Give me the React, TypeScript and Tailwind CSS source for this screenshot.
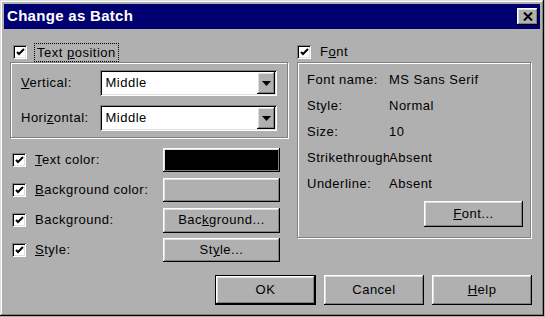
import React from "react";

const raised =
  "shadow-[inset_-1px_-1px_0_#000,inset_1px_1px_0_#fff,inset_-2px_-2px_0_#808080,inset_2px_2px_0_#dfdfdf]";
const sunken =
  "shadow-[inset_1px_1px_0_#808080,inset_-1px_-1px_0_#fff,inset_2px_2px_0_#000,inset_-2px_-2px_0_#dfdfdf]";
const etched = "border border-[#808080] shadow-[1px_1px_0_#fff,inset_1px_1px_0_#fff]";

function U({ children }: { children: React.ReactNode }) {
  return <span className="underline underline-offset-[1px]">{children}</span>;
}

function CheckBox() {
  return (
    <div className={`flex h-[14px] w-[14px] shrink-0 items-center justify-center bg-white ${sunken}`}>
      <svg width="9" height="9" viewBox="0 0 9 9">
        <path d="M1 4 L3 6 L8 1" stroke="#000" strokeWidth="2" fill="none" />
      </svg>
    </div>
  );
}

function Combo({ value }: { value: string }) {
  return (
    <div className={`flex h-[26px] w-[182px] items-stretch bg-white p-[2px] ${sunken}`}>
      <span className="flex-1 pl-[3px] leading-[22px]">{value}</span>
      <div className={`flex w-[18px] items-center justify-center bg-[#b0b0b0] ${raised}`}>
        <svg width="9" height="5" viewBox="0 0 9 5">
          <path d="M0 0 H9 L4.5 5 Z" fill="#000" />
        </svg>
      </div>
    </div>
  );
}

function Button({
  children,
  className = "",
  face = "bg-[#b0b0b0]",
}: {
  children?: React.ReactNode;
  className?: string;
  face?: string;
}) {
  return (
    <div className={`flex items-center justify-center ${face} ${raised} ${className}`}>{children}</div>
  );
}

function CheckRow({ label, children }: { label: React.ReactNode; children: React.ReactNode }) {
  return (
    <div className="flex h-[24px] items-center">
      <div className="ml-[2px]">
        <CheckBox />
      </div>
      <span className="ml-[9px] flex-1">{label}</span>
      <div className="mr-[8px]">{children}</div>
    </div>
  );
}

function InfoRow({ label, value }: { label: string; value: string }) {
  return (
    <div className="flex h-[26px] items-center">
      <span className="w-[82px] shrink-0 overflow-hidden whitespace-nowrap">{label}</span>
      <span className="whitespace-nowrap">{value}</span>
    </div>
  );
}

export default function App() {
  return (
    <div className="h-[317px] w-[545px] bg-[#b0b0b0] font-['Liberation_Sans',Arial,sans-serif] text-[13px] tracking-[0.5px] text-black">
      <div className="flex h-[316px] w-[544px] flex-col p-[4px] shadow-[inset_-1px_-1px_0_#000,inset_1px_1px_0_#dfdfdf,inset_-2px_-2px_0_#808080,inset_2px_2px_0_#fff]">
        <div className="flex h-[25px] items-center justify-between bg-[#000070] pl-[3px] pr-[2px]">
          <span className="text-[15px] font-bold tracking-[0.3px] text-white">Change as Batch</span>
          <Button className="h-[17px] w-[21px]">
            <svg width="10" height="9" viewBox="0 0 10 9">
              <path d="M1 0.5 L9 8.5 M9 0.5 L1 8.5" stroke="#000" strokeWidth="2" />
            </svg>
          </Button>
        </div>

        <div className="flex pl-[6px]">
          <div className="w-[278px]">
            <div className="mt-[13px] flex h-[20px] items-center">
              <div className="ml-[3px]">
                <CheckBox />
              </div>
              <span className="ml-[7px] h-[19px] border border-dotted border-black px-[2px] leading-[17px]">
                Text <U>p</U>osition
              </span>
            </div>
            <div className={`flex h-[76px] flex-col gap-[9px] px-[10px] pt-[7px] ${etched}`}>
              <div className="flex items-center">
                <span className="w-[82px]">
                  <U>V</U>ertical:
                </span>
                <Combo value="Middle" />
              </div>
              <div className="flex items-center">
                <span className="w-[82px]">
                  Hori<U>z</U>ontal:
                </span>
                <Combo value="Middle" />
              </div>
            </div>
            <div className="mt-[10px] flex flex-col gap-[6px]">
              <CheckRow
                label={
                  <>
                    <U>T</U>ext color:
                  </>
                }
              >
                <Button className="h-[24px] w-[117px]" face="bg-black" />
              </CheckRow>
              <CheckRow
                label={
                  <>
                    <U>B</U>ackground color:
                  </>
                }
              >
                <Button className="h-[24px] w-[117px]" />
              </CheckRow>
              <CheckRow label="Background:">
                <Button className="h-[25px] w-[117px]">
                  <span>
                    Bac<U>k</U>ground...
                  </span>
                </Button>
              </CheckRow>
              <CheckRow
                label={
                  <>
                    <U>S</U>tyle:
                  </>
                }
              >
                <Button className="h-[24px] w-[117px]">
                  <span>
                    St<U>y</U>le...
                  </span>
                </Button>
              </CheckRow>
            </div>
          </div>

          <div className="ml-[9px] w-[234px]">
            <div className="mt-[13px] flex h-[20px] items-center">
              <CheckBox />
              <span className="ml-[9px]">
                F<U>o</U>nt
              </span>
            </div>
            <div className={`flex h-[176px] flex-col pl-[9px] pr-[7px] pt-[4px] ${etched}`}>
              <InfoRow label="Font name:" value="MS Sans Serif" />
              <InfoRow label="Style:" value="Normal" />
              <InfoRow label="Size:" value="10" />
              <InfoRow label="Strikethrough" value="Absent" />
              <InfoRow label="Underline:" value="Absent" />
              <div className="mt-[4px] flex justify-end">
                <Button className="h-[26px] w-[99px]">
                  <span>
                    <U>F</U>ont...
                  </span>
                </Button>
              </div>
            </div>
          </div>
        </div>

        <div className="mt-auto mb-[7px] mr-[8px] flex justify-end gap-[8px]">
          <div className="border border-black">
            <Button className="h-[28px] w-[99px]">OK</Button>
          </div>
          <Button className="h-[30px] w-[100px]">Cancel</Button>
          <Button className="h-[30px] w-[100px]">
            <span>
              <U>H</U>elp
            </span>
          </Button>
        </div>
      </div>
    </div>
  );
}
